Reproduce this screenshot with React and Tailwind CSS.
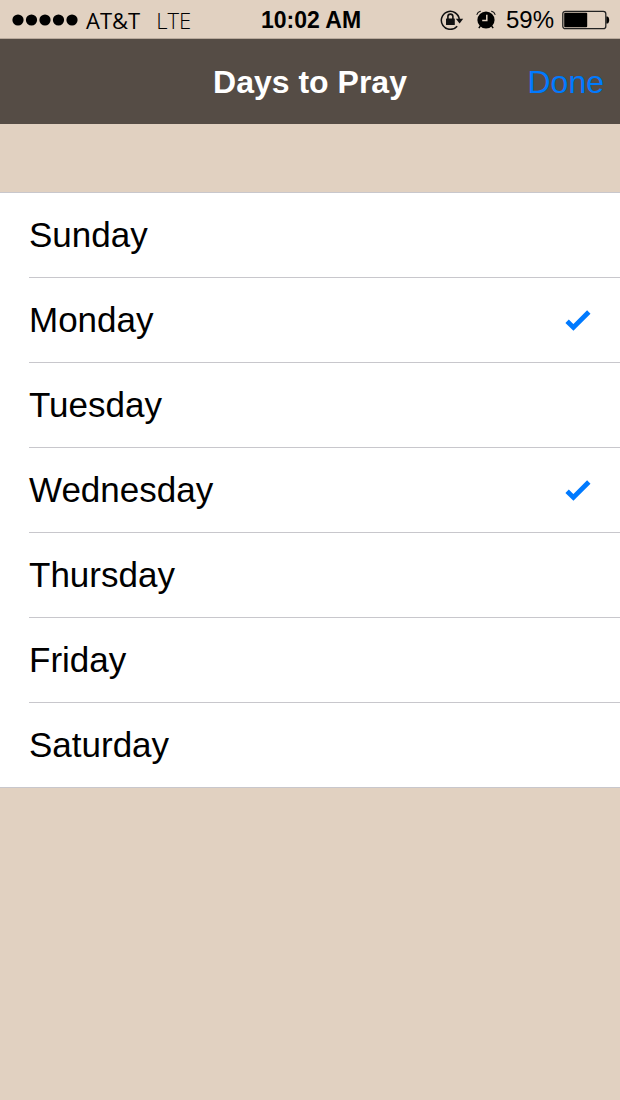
import { useState } from "react";

const DAYS = ["Sunday", "Monday", "Tuesday", "Wednesday", "Thursday", "Friday", "Saturday"];

function SignalDots() {
  return (
    <svg className="h-3 w-[66px] shrink-0" viewBox="0 0 66 12" role="img" aria-label="Signal strength">
      {[6, 19.5, 33, 46.5, 60].map((cx) => (
        <circle key={cx} cx={cx} cy="6" r="5.6" />
      ))}
    </svg>
  );
}

function RotationLockIcon() {
  return (
    <svg className="h-5 w-6 shrink-0" viewBox="0 0 24 20" fill="none" stroke="#111" role="img" aria-label="Rotation lock">
      <path d="M17.2 16.2A9 9 0 1 1 19.3 9.5" strokeWidth="1.5" />
      <path d="M15.8 8.8h7.4l-3.6 4.6z" fill="#111" stroke="none" />
      <rect x="6" y="8.6" width="8.8" height="6.4" rx="0.5" fill="#111" stroke="none" />
      <path d="M7.9 9V6.6a2.5 2.5 0 0 1 5 0V9" strokeWidth="1.6" />
    </svg>
  );
}

function AlarmIcon() {
  return (
    <svg className="h-5 w-5 shrink-0" viewBox="0 0 20 20" fill="none" role="img" aria-label="Alarm">
      <circle cx="10" cy="10" r="8.6" fill="#000" />
      <path d="M4.4 16 2.8 18.2M15.6 16l1.6 2.2" stroke="#000" strokeWidth="1.4" />
      <path d="M1 4.4C1.4 2.8 2.6 1.6 4.4 1.2M19 4.4C18.6 2.8 17.4 1.6 15.6 1.2" stroke="#111" strokeWidth="1.1" strokeLinecap="round" />
      <path d="M10.8 4.8v5.6H6.2" stroke="#e1d1c1" strokeWidth="1.5" />
    </svg>
  );
}

function BatteryIcon() {
  return (
    <svg className="h-5 w-12 shrink-0" viewBox="0 0 48 20" role="img" aria-label="Battery">
      <rect x="0.8" y="1.3" width="43" height="17.4" rx="2.5" fill="none" stroke="#222" strokeWidth="1.3" />
      <rect x="2.2" y="2.8" width="23" height="14.4" rx="1" />
      <path d="M44.4 6.4h1c2.4.8 2.4 6.4 0 7.2h-1z" />
    </svg>
  );
}

function CheckIcon() {
  return (
    <svg className="h-6 w-7 shrink-0" viewBox="0 0 28 24" fill="none" stroke="#007aff" strokeWidth="4.8" aria-hidden="true">
      <path d="M3.1 13.2 9.4 19.4 24.8 4" />
    </svg>
  );
}

function StatusBar() {
  return (
    <div className="grid h-[39px] grid-cols-[1fr_auto_1fr] items-center border-b border-[#b9aa9c] pt-px pr-[10px] pl-3 text-[23px] leading-6 text-black">
      <div className="flex items-center gap-2 font-['Open_Sans',sans-serif] text-[22px]">
        <SignalDots />
        <span>AT&amp;T</span>
        <span className="ml-2 font-light">LTE</span>
      </div>
      <time className="font-bold">10:02 AM</time>
      <div className="flex items-center justify-end gap-2">
        <div className="mr-0.5 flex items-center gap-3">
          <RotationLockIcon />
          <AlarmIcon />
        </div>
        <span className="text-2xl leading-6">59%</span>
        <BatteryIcon />
      </div>
    </div>
  );
}

function DayRow({ day, checked, onToggle }) {
  return (
    <li className="ml-[29px] border-b border-[#c8c7cc] last:ml-0 last:pl-[29px]">
      <label className="flex h-[84px] cursor-pointer items-center justify-between pr-7 text-[35px] leading-[42px] text-black">
        <span>{day}</span>
        <input type="checkbox" className="sr-only" checked={checked} onChange={onToggle} />
        {checked && <CheckIcon />}
      </label>
    </li>
  );
}

export default function App() {
  const [selected, setSelected] = useState(["Monday", "Wednesday"]);
  const toggle = (day) =>
    setSelected((days) => (days.includes(day) ? days.filter((d) => d !== day) : [...days, day]));

  return (
    <div className="min-h-screen bg-[#e1d1c1] font-['Liberation_Sans',Arial,sans-serif]">
      <StatusBar />
      <header className="grid h-[85px] grid-cols-[1fr_auto_1fr] items-center bg-[#554c45] px-4 text-[32px] leading-10">
        <h1 className="col-start-2 font-bold text-white">Days to Pray</h1>
        <button type="button" className="cursor-pointer justify-self-end text-[#007aff]">
          Done
        </button>
      </header>
      <main className="pt-[68px]">
        <ul className="relative border-t border-[#c8c7cc] bg-white">
          {DAYS.map((day) => (
            <DayRow key={day} day={day} checked={selected.includes(day)} onToggle={() => toggle(day)} />
          ))}
        </ul>
      </main>
    </div>
  );
}
